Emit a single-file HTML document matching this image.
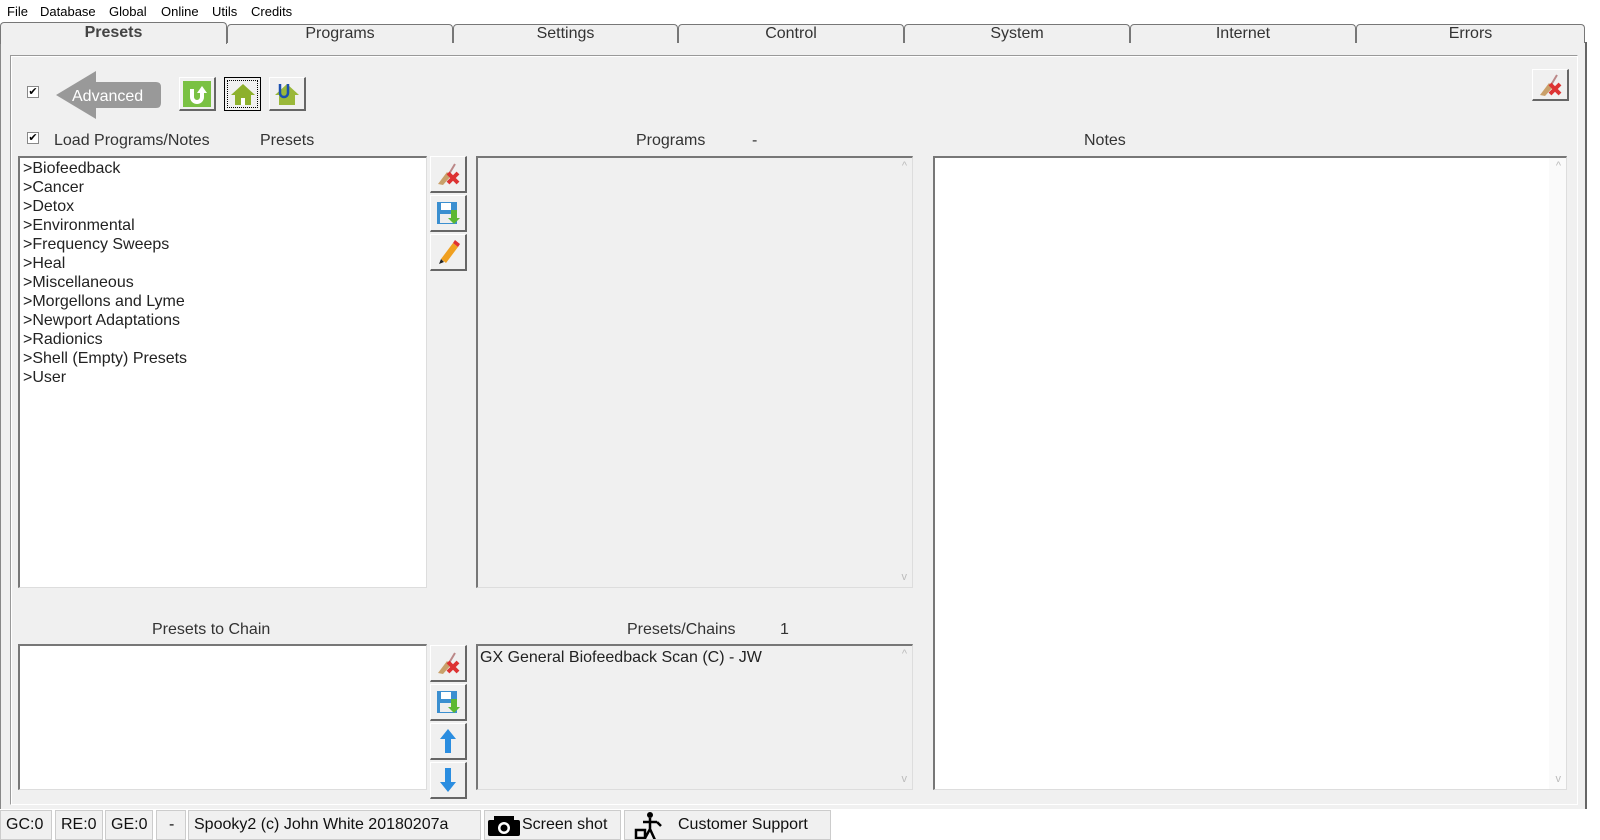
<!DOCTYPE html>
<html><head><meta charset="utf-8"><style>
*{box-sizing:border-box;margin:0;padding:0}
body{width:1600px;height:840px;background:#fff;font-family:"Liberation Sans","DejaVu Sans",sans-serif;color:#222;position:relative;overflow:hidden;font-size:16px}
.a{position:absolute}
.menu span{position:absolute;top:4px;font-size:13px;color:#000}
.tab{position:absolute;top:24px;height:19px;border:1px solid #777;border-bottom:none;border-radius:4px 4px 0 0;background:#f0f0f0;text-align:center;font-size:16px;line-height:18px;color:#333}
.sunk{position:absolute;border-top:2px solid #777;border-left:2px solid #777;border-right:1px solid #ddd;border-bottom:1px solid #ddd}
.btn{position:absolute;width:37px;height:37px;background:#f0f0f0;border:1px solid #fff;border-right:2px solid #666;border-bottom:2px solid #666;display:flex;align-items:center;justify-content:center}
.lst div{height:19px;line-height:19px;padding-left:3px}
.lbl{position:absolute;font-size:16px;color:#333}
.st{position:absolute;top:810px;height:30px;border:1px solid #ccc;background:#f0f0f0;line-height:28px;padding-left:5px;font-size:16px;color:#111;white-space:nowrap;overflow:hidden}
.cb{position:absolute;width:12px;height:12px;border:1px solid #888;background:#fff;font-size:11px;line-height:10px;text-align:center;color:#000}
</style></head><body>
<div class="menu"><span style="left:7px">File</span><span style="left:40px">Database</span><span style="left:109px">Global</span><span style="left:161px">Online</span><span style="left:212px">Utils</span><span style="left:251px">Credits</span></div>
<div class="a" style="left:0;top:42px;width:1587px;height:768px;background:#f0f0f0;border-left:1px solid #888;border-right:2px solid #666"></div>
<div class="a" style="left:0;top:42px;width:1587px;height:1px;background:#666"></div>
<div class="tab" style="left:227px;width:226px">Programs</div>
<div class="tab" style="left:453px;width:225px">Settings</div>
<div class="tab" style="left:678px;width:226px">Control</div>
<div class="tab" style="left:904px;width:226px">System</div>
<div class="tab" style="left:1130px;width:226px">Internet</div>
<div class="tab" style="left:1356px;width:229px">Errors</div>
<div class="tab" style="left:0;top:22px;width:227px;height:22px;border-bottom:none;font-weight:bold;color:#444;line-height:20px;z-index:2">Presets</div>
<div class="a" style="left:10px;top:55px;width:1568px;height:750px;border:1px solid #999;border-right-color:#fff;border-bottom-color:#fff;box-shadow:inset 1px 1px 0 #fff"></div>

<div class="cb" style="left:27px;top:86px">✔</div>
<svg class="a" style="left:56px;top:71px" width="106" height="48"><path d="M0 24 L40 0 L40 11 L100 11 Q105 11 105 16 L105 32 Q105 37 100 37 L40 37 L40 48 Z" fill="#999"/><text x="16" y="30" font-family="Liberation Sans" font-size="16" fill="#fff">Advanced</text></svg>
<div class="btn" style="left:179px;top:77px;height:34px"><svg width="28" height="26"><rect width="28" height="26" fill="#7ac143"/><path d="M9 8 V16 a5 5 0 0 0 10 0 V12" stroke="#fff" stroke-width="4" fill="none"/><path d="M14 12 L19 5 L24 12Z" fill="#fff"/></svg></div>
<div class="btn" style="left:224px;top:77px;height:34px;border:1px solid #000;outline:1px dotted #000;outline-offset:-4px"><svg width="26" height="24"><path d="M13 2 L25 13 H21 V23 H5 V13 H1Z" fill="#8db02c"/><rect x="11" y="16" width="4" height="7" fill="#fff"/></svg></div>
<div class="btn" style="left:269px;top:77px;height:34px"><svg width="26" height="24"><path d="M13 2 L25 13 H21 V23 H5 V13 H1Z" fill="#9ab83a"/><path d="M6 2 V11 a4 4 0 0 0 8 0 V2" stroke="#1b4fb0" stroke-width="2.5" fill="none"/></svg></div>
<div class="btn" style="left:1532px;top:69px;height:32px"><svg width="26" height="24"><path d="M3 22 L12 10 L16 14 L8 23Z" fill="#c9a06a"/><path d="M14 12 L20 2" stroke="#b88" stroke-width="2"/><path d="M13 11 L23 21 M23 11 L13 21" stroke="#d33" stroke-width="4"/></svg></div>

<div class="cb" style="left:27px;top:132px">✔</div>
<div class="lbl" style="left:54px;top:132px">Load Programs/Notes</div>
<div class="lbl" style="left:260px;top:132px">Presets</div>
<div class="lbl" style="left:636px;top:132px">Programs</div>
<div class="lbl" style="left:752px;top:132px">-</div>
<div class="lbl" style="left:1084px;top:132px">Notes</div>

<div class="sunk lst" style="left:18px;top:156px;width:409px;height:432px;background:#fff;padding-top:1px">
<div>&gt;Biofeedback</div><div>&gt;Cancer</div><div>&gt;Detox</div><div>&gt;Environmental</div><div>&gt;Frequency Sweeps</div><div>&gt;Heal</div><div>&gt;Miscellaneous</div><div>&gt;Morgellons and Lyme</div><div>&gt;Newport Adaptations</div><div>&gt;Radionics</div><div>&gt;Shell (Empty) Presets</div><div>&gt;User</div></div>

<div class="btn" style="left:430px;top:156px"><svg width="26" height="24"><path d="M3 22 L12 10 L16 14 L8 23Z" fill="#c9a06a"/><path d="M14 12 L20 2" stroke="#b88" stroke-width="2"/><path d="M13 11 L23 21 M23 11 L13 21" stroke="#d33" stroke-width="4"/></svg></div>
<div class="btn" style="left:430px;top:195px"><svg width="24" height="24"><rect x="1" y="1" width="20" height="22" fill="#3b8fd0"/><rect x="5" y="2" width="10" height="7" fill="#fff"/><rect x="4" y="13" width="14" height="9" fill="#eee"/><path d="M15 9 V17 H12 L18 23 L24 17 H21 V9Z" fill="#5cb832"/></svg></div>
<div class="btn" style="left:430px;top:234px"><svg width="24" height="26"><path d="M5 20 L17 4 L22 8 L10 24Z" fill="#f0a020"/><path d="M17 4 L19 1 L24 5 L22 8Z" fill="#e03030"/><path d="M5 20 L3 25 L8 23Z" fill="#222"/></svg></div>

<div class="sunk" style="left:476px;top:156px;width:437px;height:432px;background:#f0f0f0"><span class="a" style="right:5px;top:2px;color:#bbb;font-size:11px">^</span><span class="a" style="right:5px;bottom:4px;color:#bbb;font-size:11px">v</span></div>
<div class="sunk" style="left:933px;top:156px;width:634px;height:634px;background:#fff"><div class="a" style="right:0;top:0;width:17px;height:100%;background:#fafafa"></div><span class="a" style="right:5px;top:2px;color:#bbb;font-size:11px">^</span><span class="a" style="right:5px;bottom:4px;color:#bbb;font-size:11px">v</span></div>

<div class="lbl" style="left:152px;top:621px">Presets to Chain</div>
<div class="lbl" style="left:627px;top:621px">Presets/Chains</div>
<div class="lbl" style="left:780px;top:621px">1</div>
<div class="sunk" style="left:18px;top:644px;width:409px;height:146px;background:#fff"></div>
<div class="btn" style="left:430px;top:645px"><svg width="26" height="24"><path d="M3 22 L12 10 L16 14 L8 23Z" fill="#c9a06a"/><path d="M14 12 L20 2" stroke="#b88" stroke-width="2"/><path d="M13 11 L23 21 M23 11 L13 21" stroke="#d33" stroke-width="4"/></svg></div>
<div class="btn" style="left:430px;top:684px"><svg width="24" height="24"><rect x="1" y="1" width="20" height="22" fill="#3b8fd0"/><rect x="5" y="2" width="10" height="7" fill="#fff"/><rect x="4" y="13" width="14" height="9" fill="#eee"/><path d="M15 9 V17 H12 L18 23 L24 17 H21 V9Z" fill="#5cb832"/></svg></div>
<div class="btn" style="left:430px;top:723px"><svg width="20" height="26"><path d="M10 1 L18 11 H13 V25 H7 V11 H2Z" fill="#2a8de0"/></svg></div>
<div class="btn" style="left:430px;top:762px"><svg width="20" height="26"><path d="M10 25 L18 15 H13 V1 H7 V15 H2Z" fill="#2a8de0"/></svg></div>
<div class="sunk" style="left:476px;top:644px;width:437px;height:146px;background:#f0f0f0;padding:3px 0 0 2px">GX General Biofeedback Scan (C) - JW<span class="a" style="right:5px;top:2px;color:#bbb;font-size:11px">^</span><span class="a" style="right:5px;bottom:4px;color:#bbb;font-size:11px">v</span></div>

<div class="a" style="left:0;top:809px;width:1600px;height:31px;background:#fff"></div>
<div class="st" style="left:0;width:52px">GC:0</div>
<div class="st" style="left:55px;width:48px">RE:0</div>
<div class="st" style="left:105px;width:48px">GE:0</div>
<div class="st" style="left:156px;width:30px;padding-left:12px">-</div>
<div class="st" style="left:188px;width:293px">Spooky2 (c) John White 20180207a</div>
<div class="st" style="left:484px;width:137px;padding-left:37px"><svg class="a" style="left:3px;top:5px" width="32" height="20"><rect y="4" width="32" height="16" rx="2" fill="#000"/><rect x="6" y="0" width="20" height="5" fill="#000"/><circle cx="16" cy="12" r="6" fill="#fff"/><circle cx="16" cy="12" r="3.5" fill="#000"/></svg>Screen shot</div>
<div class="st" style="left:624px;width:207px;padding-left:53px"><svg class="a" style="left:8px;top:0" width="34" height="30"><circle cx="17" cy="4" r="3" fill="#000"/><path d="M17 7 V18 M10 11 L24 11 M24 11 L28 15 M17 18 L11 29 M17 18 L22 29 M3 19 H12 V27 H3Z" stroke="#000" stroke-width="2.5" fill="none"/></svg>Customer Support</div>
</body></html>
